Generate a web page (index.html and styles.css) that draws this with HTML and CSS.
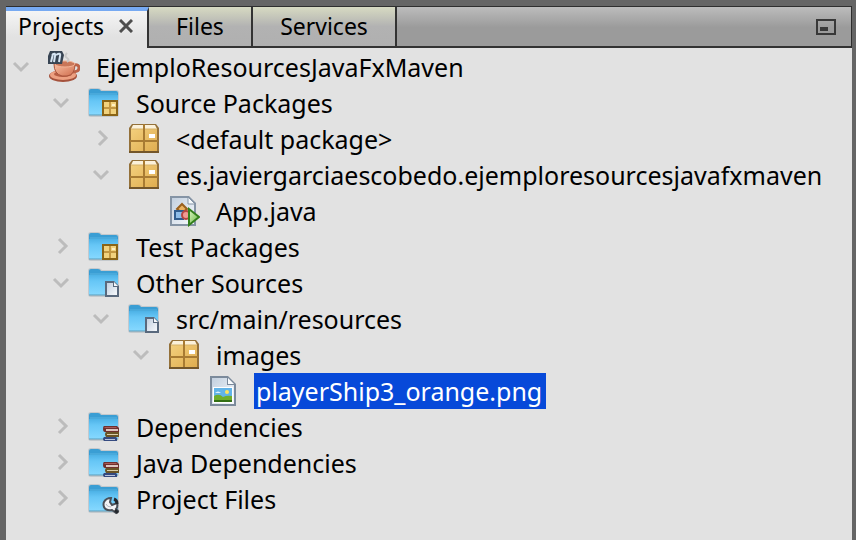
FILE: index.html
```
<!DOCTYPE html>
<html lang="en">
<head>
    <meta charset="UTF-8">
    <meta name="viewport" content="width=device-width, initial-scale=1.0">
    <title>Projects</title>
    <link rel="stylesheet" href="styles.css">
</head>
<body>
    <!-- icon definitions -->
    <svg class="defs" width="0" height="0" aria-hidden="true">
        <defs>
            <linearGradient id="gFolder" x1="0" y1="0" x2="0" y2="1">
                <stop offset="0" stop-color="#4db2e6"/>
                <stop offset="0.3" stop-color="#66c6f6"/>
                <stop offset="1" stop-color="#86d9ff"/>
            </linearGradient>
            <linearGradient id="gBox" x1="0" y1="0" x2="1" y2="1">
                <stop offset="0" stop-color="#f3cf7c"/>
                <stop offset="1" stop-color="#dfad50"/>
            </linearGradient>
            <linearGradient id="gPage" x1="0" y1="0" x2="1" y2="1">
                <stop offset="0" stop-color="#c3d0df"/>
                <stop offset="1" stop-color="#f6f9fc"/>
            </linearGradient>
            <linearGradient id="gCup" x1="0" y1="0" x2="1" y2="1">
                <stop offset="0" stop-color="#f9c0a4"/>
                <stop offset="1" stop-color="#cf6c4c"/>
            </linearGradient>
            <linearGradient id="gRun" x1="0" y1="0" x2="1" y2="1">
                <stop offset="0" stop-color="#e0f7c8"/>
                <stop offset="1" stop-color="#64b83c"/>
            </linearGradient>
        </defs>

        <symbol id="down" viewBox="0 0 20 20">
            <path d="M3 6l7 7 7-7" fill="none" stroke="#bcbcbc" stroke-width="3"/>
        </symbol>
        <symbol id="right" viewBox="0 0 20 20">
            <path d="M8 2l7 7-7 7" fill="none" stroke="#bcbcbc" stroke-width="3"/>
        </symbol>

        <symbol id="folder" viewBox="0 0 32 32">
            <path d="M0 4q0-3 3-3h7q2 0 4 2h14q3 0 3 3v21q0 3-3 3H3q-3 0-3-3z" fill="#8d9ca5" opacity="0.35"/>
            <path d="M1 4q0-2 2-2h7q2 0 3 2h15q2 0 2 2v4H1z" fill="#3a9ed4"/>
            <path d="M1 8h29v19q0 1-1 1H2q-1 0-1-1z" fill="url(#gFolder)"/>
            <path d="M2 7h27" stroke="#58b5e3" stroke-width="1"/>
            <path d="M1 28h29" stroke="#5a9dbb" stroke-width="1"/>
        </symbol>

        <symbol id="package" viewBox="0 0 32 32">
            <path d="M4 1h24l3 4v25H1V5z" fill="#94713a"/>
            <path d="M5 2h10v4H3zM17 2h10l2 4H17z" fill="#fbf1da"/>
            <path d="M3 6h12v11H3zM17 6h12v11H17zM3 19h12v9H3zM17 19h12v9H17z" fill="url(#gBox)"/>
            <path d="M15 1h2v28h-2zM2 17h28v2H2z" fill="#a87b32"/>
            <path d="M3 6h12M17 6h12" stroke="#d6b26b"/>
            <path d="M21 11h6v4h-6z" fill="#fff"/>
            <path d="M1 29h30" stroke="#73562a" stroke-width="2"/>
        </symbol>

        <symbol id="src" viewBox="0 0 32 32">
            <use href="#folder" width="32" height="32"/>
            <path d="M14 13h16v16H14z" fill="#8a6416"/>
            <path d="M16 15h5v5h-5zM23 15h5v5h-5zM16 22h5v5h-5zM23 22h5v5h-5z" fill="#f1d27e"/>
            <path d="M22 15v12M16 21h12" stroke="#c39843" stroke-width="2"/>
            <path d="M24 17h3v2h-3z" fill="#fff1c4"/>
        </symbol>

        <symbol id="other" viewBox="0 0 32 32">
            <use href="#folder" width="32" height="32"/>
            <path d="M17 14h9l5 5v11H17z" fill="#59697d"/>
            <path d="M19 16h6v4h4v8H19z" fill="url(#gPage)"/>
            <path d="M26 15l4 4h-4z" fill="#f5f8fb"/>
        </symbol>

        <symbol id="books" viewBox="0 0 32 32">
            <use href="#folder" width="32" height="32"/>
            <path d="M16 15h13l2 2v4H17q-2 0-2-3t1-3z" fill="#70302f"/>
            <path d="M17 16h11l1 1H16z" fill="#a85b58"/>
            <path d="M18 18h12v2H18z" fill="#ddc5bf"/>
            <path d="M18 21h13v5H18q-2-3 0-5z" fill="#6a5426"/>
            <path d="M19 23h11v1H19z" fill="#d9cfac"/>
            <path d="M16 26h12l1 1v3H16q-2-2 0-4z" fill="#354a80"/>
            <path d="M17 28h10v1H17z" fill="#b8c2db"/>
        </symbol>

        <symbol id="tools" viewBox="0 0 32 32">
            <use href="#folder" width="32" height="32"/>
            <path d="M16 19q2-4 7-4l-1 4 2 3 5-2q1 4-1 6l2 2-2 2-4-3q-6 1-8-3-1-3 0-5z" fill="#f3f4f6" stroke="#4a5058" stroke-width="2"/>
            <path d="M26 16q3 1 3 5M27 27l3 3" fill="none" stroke="#23272c" stroke-width="3"/>
            <path d="M18 21q1 3 5 3" fill="none" stroke="#b2bac3" stroke-width="1"/>
        </symbol>

        <symbol id="java" viewBox="0 0 32 32">
            <path d="M2 1h19l7 7v23H2z" fill="#8594a5"/>
            <path d="M4 3h16v6h6v20H4z" fill="url(#gPage)"/>
            <path d="M20 2l7 7h-7z" fill="#f7fafc" stroke="#8594a5"/>
            <path d="M14 9l5 5-5 4-5-4z" fill="#eab260" stroke="#99601e" stroke-width="2"/>
            <path d="M7 16h8v8H7z" fill="#8dbde8" stroke="#2f5d8f" stroke-width="2"/>
            <circle cx="18" cy="20" r="4" fill="#f09a93" stroke="#b54742" stroke-width="2"/>
            <path d="M21 14l10 8-10 8z" fill="url(#gRun)" stroke="#337f1c" stroke-width="2"/>
        </symbol>

        <symbol id="image" viewBox="0 0 32 32">
            <path d="M2 1h18l8 8v22H2z" fill="#7b8a9b"/>
            <path d="M4 3h15v7h7v19H4z" fill="url(#gPage)"/>
            <path d="M20 3l6 6h-6z" fill="#f9fbfd"/>
            <path d="M5 12h20v16H5z" fill="#fff"/>
            <path d="M6 13h18v9H6z" fill="#62b4e8"/>
            <path d="M6 21q5-3 9 1 4-2 9-1v6H6z" fill="#6fae2c"/>
            <path d="M6 25h18v2H6z" fill="#336f13"/>
            <circle cx="19" cy="17" r="2" fill="#ffe35c"/>
            <path d="M7 18q3-3 6 0z" fill="#e1f2fb"/>
        </symbol>

        <symbol id="maven" viewBox="0 0 32 32">
            <ellipse cx="15" cy="25" rx="14" ry="6" fill="#a5523c"/>
            <ellipse cx="15" cy="24" rx="13" ry="5" fill="#eda081"/>
            <ellipse cx="15" cy="23" rx="9" ry="3" fill="#b75d43"/>
            <path d="M26 14q5-1 5 3 0 4-7 4" fill="none" stroke="#bd6247" stroke-width="3"/>
            <path d="M6 13h21q0 11-8 12h-5Q6 23 6 13z" fill="url(#gCup)" stroke="#a9543c"/>
            <ellipse cx="17" cy="13" rx="10" ry="3" fill="#c97658" stroke="#f2b295"/>
            <path d="M19 2q-3 3 0 5t0 4" fill="none" stroke="#c9c9c9" stroke-width="2"/>
            <path d="M2 0h12l2 4-2 9H0V5z" fill="#384554"/>
            <path d="M3 11l2-8M4 4q4-3 3 1l-1 6M8 4q5-3 4 1l-1 6" fill="none" stroke="#d5e4f2" stroke-width="2"/>
        </symbol>
    </svg>

    <main class="window">
        <header class="tabs">
            <div class="tab active">
                <span>Projects</span>
                <button class="close" aria-label="Close">
                    <svg width="14" height="14" viewBox="0 0 14 14"><path d="M1 1l12 12M13 1L1 13" stroke="#4d4d4d" stroke-width="3"/></svg>
                </button>
            </div>
            <button class="tab files">Files</button>
            <button class="tab services">Services</button>
            <button class="minimize" aria-label="Minimize">
                <svg width="20" height="16" viewBox="0 0 20 16"><path d="M1 1h18v14H1z" fill="none" stroke="#383838" stroke-width="2"/><path d="M4 8h8v4H4z" fill="#383838"/></svg>
            </button>
        </header>

        <ul class="tree">
            <li>
                <div class="row">
                    <button class="toggle" aria-label="Collapse"><svg><use href="#down"/></svg></button>
                    <svg class="icon"><use href="#maven"/></svg>
                    <span class="name">EjemploResourcesJavaFxMaven</span>
                </div>
                <ul>
                    <li>
                        <div class="row">
                            <button class="toggle" aria-label="Collapse"><svg><use href="#down"/></svg></button>
                            <svg class="icon"><use href="#src"/></svg>
                            <span class="name">Source Packages</span>
                        </div>
                        <ul>
                            <li>
                                <div class="row">
                                    <button class="toggle" aria-label="Expand"><svg><use href="#right"/></svg></button>
                                    <svg class="icon"><use href="#package"/></svg>
                                    <span class="name">&lt;default package&gt;</span>
                                </div>
                            </li>
                            <li>
                                <div class="row">
                                    <button class="toggle" aria-label="Collapse"><svg><use href="#down"/></svg></button>
                                    <svg class="icon"><use href="#package"/></svg>
                                    <span class="name">es.javiergarciaescobedo.ejemploresourcesjavafxmaven</span>
                                </div>
                                <ul>
                                    <li>
                                        <div class="row leaf">
                                            <svg class="icon"><use href="#java"/></svg>
                                            <span class="name">App.java</span>
                                        </div>
                                    </li>
                                </ul>
                            </li>
                        </ul>
                    </li>
                    <li>
                        <div class="row">
                            <button class="toggle" aria-label="Expand"><svg><use href="#right"/></svg></button>
                            <svg class="icon"><use href="#src"/></svg>
                            <span class="name">Test Packages</span>
                        </div>
                    </li>
                    <li>
                        <div class="row">
                            <button class="toggle" aria-label="Collapse"><svg><use href="#down"/></svg></button>
                            <svg class="icon"><use href="#other"/></svg>
                            <span class="name">Other Sources</span>
                        </div>
                        <ul>
                            <li>
                                <div class="row">
                                    <button class="toggle" aria-label="Collapse"><svg><use href="#down"/></svg></button>
                                    <svg class="icon"><use href="#other"/></svg>
                                    <span class="name">src/main/resources</span>
                                </div>
                                <ul>
                                    <li>
                                        <div class="row">
                                            <button class="toggle" aria-label="Collapse"><svg><use href="#down"/></svg></button>
                                            <svg class="icon"><use href="#package"/></svg>
                                            <span class="name">images</span>
                                        </div>
                                        <ul>
                                            <li>
                                                <div class="row leaf">
                                                    <svg class="icon"><use href="#image"/></svg>
                                                    <span class="name selected">playerShip3_orange.png</span>
                                                </div>
                                            </li>
                                        </ul>
                                    </li>
                                </ul>
                            </li>
                        </ul>
                    </li>
                    <li>
                        <div class="row">
                            <button class="toggle" aria-label="Expand"><svg><use href="#right"/></svg></button>
                            <svg class="icon"><use href="#books"/></svg>
                            <span class="name">Dependencies</span>
                        </div>
                    </li>
                    <li>
                        <div class="row">
                            <button class="toggle" aria-label="Expand"><svg><use href="#right"/></svg></button>
                            <svg class="icon"><use href="#books"/></svg>
                            <span class="name">Java Dependencies</span>
                        </div>
                    </li>
                    <li>
                        <div class="row">
                            <button class="toggle" aria-label="Expand"><svg><use href="#right"/></svg></button>
                            <svg class="icon"><use href="#tools"/></svg>
                            <span class="name">Project Files</span>
                        </div>
                    </li>
                </ul>
            </li>
        </ul>
    </main>
</body>
</html>
```
FILE: styles.css
```
* {
    box-sizing: border-box;
}
body {
    margin: 0;
    background-color: #656565;
    color: #000;
    font-family: "Noto Sans", "Open Sans", sans-serif;
    font-size: 25px;
}
button {
    margin: 0;
    padding: 0;
    border: none;
    background: none;
    color: inherit;
    font: inherit;
    cursor: pointer;
}
svg {
    display: block;
}
.defs {
    position: absolute;
}
.window {
    display: flex;
    flex-direction: column;
    min-height: 100vh;
    padding: 6px 4px 0 6px;
}
.tabs {
    display: flex;
    height: 42px;
    border-top: 1px solid #2e2e2e;
    border-right: 1px solid #2e2e2e;
    background: linear-gradient(#bcbcbc, #9b9b9b 50%, #9b9b9b);
    font-size: 23px;
}
.tab {
    display: flex;
    align-items: center;
    justify-content: center;
    padding-bottom: 2px;
    border-right: 2px solid #333;
    border-bottom: 2px solid #333;
    background: linear-gradient(#d7dac2, #b2b2b2 50%, #b0b0b0);
    line-height: 36px;
}
.tab.active {
    width: 143px;
    justify-content: space-between;
    padding: 0 14px 7px 12px;
    border-top: 4px solid #77aaf2;
    border-bottom: none;
    background: linear-gradient(#f5f5f5, #e2e2e2 70%);
    line-height: 30px;
}
.files {
    width: 104px;
}
.services {
    width: 144px;
}
.minimize {
    display: flex;
    flex: 1;
    align-items: center;
    justify-content: flex-end;
    padding-right: 15px;
    border-bottom: 2px solid #333;
}
.tree {
    flex: 1;
    padding: 1px 0 0;
    background-color: #e2e2e2;
}
ul {
    margin: 0;
    padding: 0 0 0 40px;
    list-style: none;
}
.row {
    display: flex;
    align-items: center;
    height: 36px;
    padding-left: 5px;
}
.row.leaf {
    padding-left: 42px;
}
.toggle {
    width: 20px;
    margin-right: 17px;
}
.toggle svg {
    width: 20px;
    height: 20px;
}
.icon {
    flex: none;
    width: 32px;
    height: 32px;
    margin-right: 14px;
}
.name {
    padding: 0 4px 0 2px;
    line-height: 36px;
    white-space: nowrap;
}
.selected {
    background-color: #0749d9;
    color: #fff;
}
```
